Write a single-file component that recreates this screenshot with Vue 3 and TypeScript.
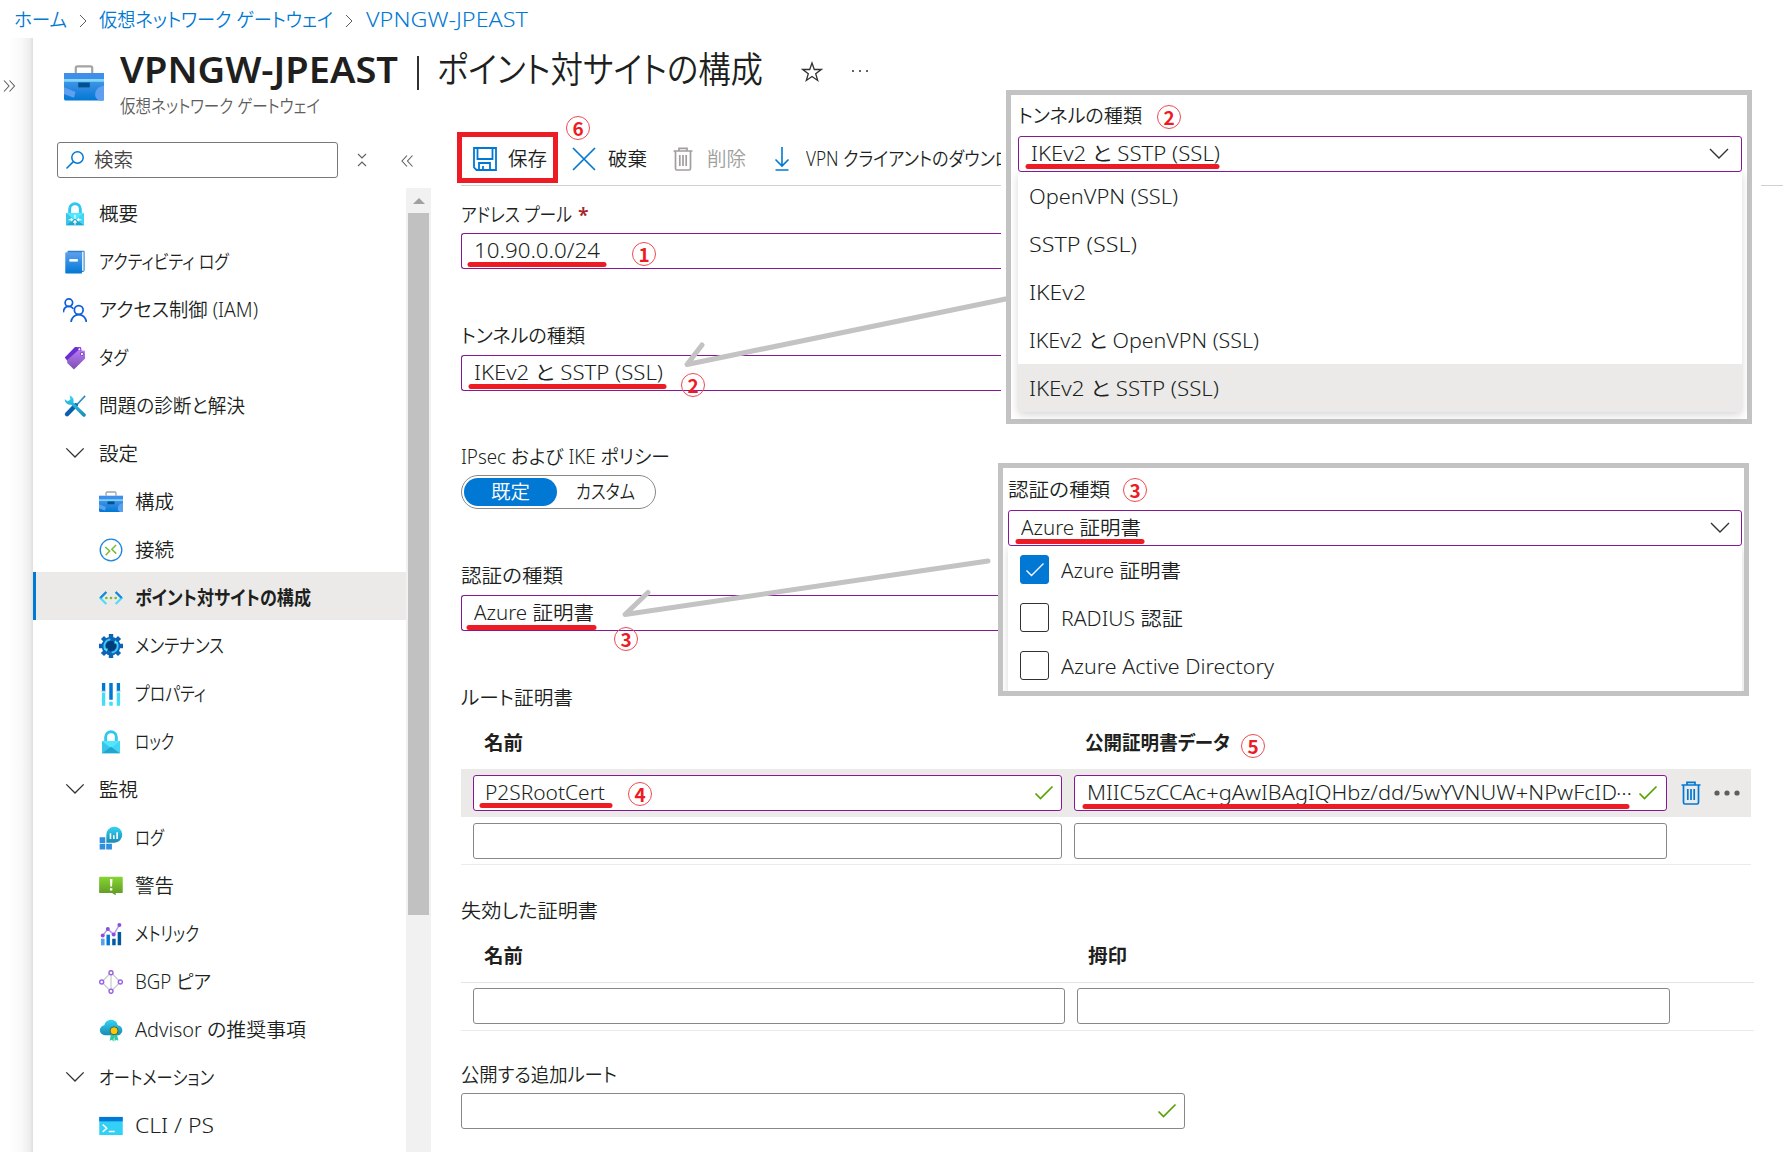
<script setup lang="ts">
import type { Directive } from 'vue'

/* Condenses or widens a label so that it takes exactly the given width. */
const vFit: Directive<HTMLElement, number> = {
  mounted(el, { value }) {
    el.style.display = 'inline-block'
    el.style.whiteSpace = 'pre'
    el.style.flex = 'none'
    const natural = el.getBoundingClientRect().width
    el.style.width = `${value}px`
    el.style.transformOrigin = '0 50%'
    el.style.transform = `scaleX(${value / natural})`
  },
}

interface NavItem {
  label: string
  w: number
  icon: string
  level: 0 | 1
  active?: boolean
}

const nav: NavItem[] = [
  { label: '概要', w: 39, icon: 'vpnlock', level: 0 },
  { label: 'アクティビティ ログ', w: 130, icon: 'book', level: 0 },
  { label: 'アクセス制御 (IAM)', w: 159, icon: 'people', level: 0 },
  { label: 'タグ', w: 29, icon: 'tag', level: 0 },
  { label: '問題の診断と解決', w: 146, icon: 'tools', level: 0 },
  { label: '設定', w: 39, icon: 'chevron', level: 0 },
  { label: '構成', w: 39, icon: 'case', level: 1 },
  { label: '接続', w: 39, icon: 'link', level: 1 },
  { label: 'ポイント対サイトの構成', w: 176, icon: 'p2s', level: 1, active: true },
  { label: 'メンテナンス', w: 89, icon: 'gear', level: 1 },
  { label: 'プロパティ', w: 71, icon: 'props', level: 1 },
  { label: 'ロック', w: 39, icon: 'lock', level: 1 },
  { label: '監視', w: 39, icon: 'chevron', level: 0 },
  { label: 'ログ', w: 29, icon: 'logs', level: 1 },
  { label: '警告', w: 39, icon: 'alert', level: 1 },
  { label: 'メトリック', w: 64, icon: 'metric', level: 1 },
  { label: 'BGP ピア', w: 76, icon: 'bgp', level: 1 },
  { label: 'Advisor の推奨事項', w: 171, icon: 'advisor', level: 1 },
  { label: 'オートメーション', w: 115, icon: 'chevron', level: 0 },
  { label: 'CLI / PS', w: 79, icon: 'cli', level: 1 },
]

const tunnelOptions = [
  { label: 'OpenVPN (SSL)', w: 149 },
  { label: 'SSTP (SSL)', w: 108 },
  { label: 'IKEv2', w: 57 },
  { label: 'IKEv2 と OpenVPN (SSL)', w: 230 },
  { label: 'IKEv2 と SSTP (SSL)', w: 190, selected: true },
]

const authOptions = [
  { label: 'Azure 証明書', w: 120, checked: true },
  { label: 'RADIUS 認証', w: 122 },
  { label: 'Azure Active Directory', w: 213 },
]

const badges = [
  { n: 1, x: 644, y: 254 },
  { n: 2, x: 693, y: 385 },
  { n: 3, x: 626, y: 639 },
  { n: 4, x: 640, y: 794 },
  { n: 5, x: 1253, y: 746 },
  { n: 6, x: 578, y: 128 },
  { n: 2, x: 1169, y: 117 },
  { n: 3, x: 1135, y: 490 },
]

const underlines = [
  [470, 604, 264.5],
  [471, 664, 386.5],
  [469, 594, 627.5],
  [482, 610, 805.5],
  [1085, 1627, 806.5],
  [1028, 1217, 166.5],
  [1018, 1142, 541.5],
]
</script>

<template>
  <div class="portal">
    <svg class="defs" width="0" height="0">
      <defs>
        <linearGradient id="gCyan" x1="0" y1="0" x2="0" y2="1"><stop offset="0" stop-color="#32d4f5" /><stop offset="1" stop-color="#198ab3" /></linearGradient>
        <linearGradient id="gBlue" x1="0" y1="0" x2="0" y2="1"><stop offset="0" stop-color="#5ea0ef" /><stop offset="1" stop-color="#0078d4" /></linearGradient>
        <linearGradient id="gPurple" x1="0" y1="0" x2="0" y2="1"><stop offset="0" stop-color="#b77af4" /><stop offset="1" stop-color="#7a4fb0" /></linearGradient>
        <linearGradient id="gGreen" x1="0" y1="0" x2="0" y2="1"><stop offset="0" stop-color="#86d633" /><stop offset="1" stop-color="#5e9624" /></linearGradient>
        <symbol id="case" viewBox="0 0 18 18">
          <path d="M5.3 4.400V2.300c0-.5.3-.8.8-.8h5.800c.5 0 .8.3.8.8v2.100" fill="none" stroke="#a3a3a3" stroke-width="1" />
          <path d="M0 4.400h18v11.200c0 .5-.3.900-.8.900H.8c-.5 0-.8-.4-.8-.9z" fill="url(#gBlue)" />
          <path d="M0 4.400h18V7H0z" fill="#3f8fe8" />
          <path d="M0 7h18v1.200H0z" fill="#7fd8f8" />
          <path d="M6.400 8.600h5.200v2.100H6.400z" fill="#00508f" />
          <path d="M0 10.600l5.200 2.100-.7 2.600L0 13.600zM18 10c-2.400.2-3.900 1.700-4 4 .1 1.200.9 2 2 2.500H18z" fill="#5ea0ef" />
        </symbol>
        <symbol id="trash" viewBox="0 0 24 24">
          <path d="M2.500 4h19M8 4V1.300h8V4M4.500 4v17.500c0 1 .6 1.500 1.500 1.500h12c.9 0 1.500-.5 1.500-1.500V4M8.800 8v11M12 8v11M15.200 8v11" fill="none" stroke="currentColor" stroke-width="1.700" />
        </symbol>
        <symbol id="check" viewBox="0 0 20 16"><path d="M1.500 8.500l5 5L18.500 1.500" fill="none" stroke="#57a300" stroke-width="1.700" /></symbol>
        <symbol id="down" viewBox="0 0 20 12"><path d="M1 1l9 9 9-9" fill="none" stroke="#323130" stroke-width="1.400" /></symbol>
      </defs>
    </svg>

    <nav class="crumbs">
      <a v-fit="53">ホーム</a>
      <svg width="8" height="14" viewBox="0 0 8 14"><path d="M1 1l6 6-6 6" fill="none" stroke="#605e5c" /></svg>
      <a v-fit="234">仮想ネットワーク ゲートウェイ</a>
      <svg width="8" height="14" viewBox="0 0 8 14"><path d="M1 1l6 6-6 6" fill="none" stroke="#605e5c" /></svg>
      <a class="here" v-fit="162">VPNGW-JPEAST</a>
    </nav>

    <div class="stage">
      <aside class="rail">
        <svg width="13" height="12" viewBox="0 0 13 12"><path d="M1 .5L6 6 1 11.500M6.500.5l5 5.500-5 5.500" fill="none" stroke="#605e5c" stroke-width="1.100" /></svg>
      </aside>

      <section class="blade">
        <header class="head">
          <svg class="logo" width="40" height="41" viewBox="0 0 18 18" preserveAspectRatio="none"><use href="#case" width="18" height="18" /></svg>
          <div class="titles">
            <h1>
              <b v-fit="278">VPNGW-JPEAST</b><i class="bar"></i><span v-fit="326">ポイント対サイトの構成</span>
            </h1>
            <p><span v-fit="200">仮想ネットワーク ゲートウェイ</span></p>
          </div>
          <svg class="star" width="22" height="22" viewBox="0 0 22 22"><path d="M11 2l2.300 6.500h6.900l-5.500 4.200 2 6.800-5.700-4-5.700 4 2-6.800L1.800 8.500h6.900z" fill="none" stroke="#323130" stroke-width="1.300" /></svg>
          <svg class="more" width="18" height="4"><g fill="#323130"><circle cx="2" cy="2" r="1" /><circle cx="9" cy="2" r="1" /><circle cx="16" cy="2" r="1" /></g></svg>
        </header>

        <div class="lower">
          <div class="side">
            <div class="searchrow">
              <div class="search">
                <svg width="20" height="20" viewBox="0 0 20 20"><circle cx="12.500" cy="7.500" r="5.700" fill="none" stroke="#0078d4" stroke-width="1.500" /><path d="M8.400 11.600L1.500 18.500" stroke="#0078d4" stroke-width="1.500" /></svg>
                <span v-fit="39">検索</span>
              </div>
              <svg class="collapse" width="10" height="14" viewBox="0 0 10 14"><path d="M1 1l4 4 4-4M1 13l4-4 4 4" fill="none" stroke="#605e5c" stroke-width="1.100" /></svg>
              <svg class="hide" width="13" height="12" viewBox="0 0 13 12"><path d="M6 .5L1 6l5 5.500M11.500.5l-5 5.500 5 5.500" fill="none" stroke="#605e5c" stroke-width="1.100" /></svg>
            </div>
            <div class="navwrap">
              <ul class="nav">
                <li v-for="it in nav" :key="it.label" :class="{ sub: it.level === 1, active: it.active }">
                  <svg width="24" height="24" viewBox="0 0 18 18">
                    <path v-if="it.icon === 'chevron'" d="M2.500 4.800L9 11.300l6.500-6.500" fill="none" stroke="#323130" stroke-width="1" />
                    <use v-else-if="it.icon === 'case'" href="#case" />
                    <g v-else-if="it.icon === 'vpnlock' || it.icon === 'lock'">
                      <path d="M5 9V5.300a4 4 0 018 0V9" fill="none" stroke="#32c8ee" stroke-width="2.200" />
                      <path d="M2.300 8.200h13.400v9.300H2.300z" fill="#50e6ff" />
                      <path d="M2.300 8.200L9 13.600l-6.700 3.900z" fill="#37c6ea" />
                      <path d="M15.700 8.200L9 13.600l6.700 3.900z" fill="#42d5f4" />
                      <path d="M2.300 17.500L9 12.600l6.700 4.900z" fill="#22a4cc" />
                      <path v-if="it.icon === 'vpnlock'" d="M9 9.600v2.700M9 14v3M4.200 13.300h2.500M13.800 13.300h-2.500M7.800 15.400L9 14l1.200 1.400M6 12.300l1.200 1L6 14.300M12 12.300l-1.200 1 1.200 1" stroke="#fff" stroke-width=".9" fill="none" />
                    </g>
                    <g v-else-if="it.icon === 'book'">
                      <path d="M3.500.6h12c.4 0 .7.300.7.700v13.500c0 1-.6 1.700-1.500 1.700H3z" fill="#2f7fc4" />
                      <path d="M14.200 1.300h1.300v14.300h-1.300z" fill="#d8ecfa" />
                      <path d="M2.600 1.700h11.600v16H2.600c-.5 0-.9-.4-.9-.9V2.600c0-.5.4-.9.900-.9z" fill="url(#gBlue)" />
                      <path d="M4.800 6.800h6.300v1.900H4.800z" fill="#fff" />
                    </g>
                    <g v-else-if="it.icon === 'people'" fill="none" stroke="#0f5fdb" stroke-width="1.300">
                      <circle cx="4.400" cy="3.500" r="2.800" /><path d="M.2 10.800c.3-2.800 2-4.500 4.200-4.500 1.400 0 2.600.6 3.400 1.700" />
                      <circle cx="11.800" cy="9" r="3.300" /><path d="M6 18c.4-3.300 2.900-5.600 5.800-5.600s5.400 2.300 5.800 5.600" />
                    </g>
                    <g v-else-if="it.icon === 'tag'">
                      <path d="M1.300 8.700L9 .8l4.500.1.500 3.400-9.800 8z" fill="#6b2fd0" />
                      <path d="M3.200 10.500l8.200-7.300 5 .3.200 5.800-8.400 8.400-5-5z" fill="url(#gPurple)" />
                      <circle cx="14.200" cy="6" r="1.200" fill="#fff" stroke="#6a35b5" stroke-width=".6" /><circle cx="12.300" cy="2.400" r=".8" fill="#fff" />
                    </g>
                    <g v-else-if="it.icon === 'tools'">
                      <path d="M16.600 1.400L9.500 9" stroke="#2b8cc4" stroke-width="1.200" />
                      <path d="M9.500 8.500l-6.500 6.700" stroke="#0b5fb0" stroke-width="3.300" stroke-linecap="round" />
                      <path d="M5 1.200a4 4 0 012.800 5.200l8.900 8.500c.6.600.6 1.200 0 1.800s-1.300.6-1.900 0L6.200 8A4.200 4.200 0 011.200 4l2.500 1.500L5.600 4z" fill="url(#gCyan)" />
                    </g>
                    <g v-else-if="it.icon === 'link'">
                      <circle cx="9" cy="9" r="8.100" fill="#fff" stroke="#1e85dd" stroke-width="1" />
                      <path d="M4.700 6.800l3.300 3-3 3.100M12.800 5.200L9.600 8.500l3.300 3.200" fill="none" stroke="#76bc2d" stroke-width="1.100" />
                    </g>
                    <g v-else-if="it.icon === 'p2s'">
                      <path d="M5.500 4.500L1 9l4.500 4.500M12.500 4.500L17 9l-4.500 4.500" fill="none" stroke="#50dcf8" stroke-width="1.700" />
                      <path d="M5.500 4.500L1 9M12.500 4.500L17 9" fill="none" stroke="#1a86dc" stroke-width="1.700" />
                      <circle cx="5.500" cy="9" r="1" fill="#76bc2d" /><circle cx="9" cy="9" r="1" fill="#76bc2d" /><circle cx="12.500" cy="9" r="1" fill="#76bc2d" />
                    </g>
                    <g v-else-if="it.icon === 'gear'">
                      <path d="M9 0v18M0 9h18M2.600 2.600l12.800 12.800M15.400 2.600L2.600 15.400" stroke="#0a64b8" stroke-width="3.300" />
                      <circle cx="9" cy="9" r="7" fill="#0a64b8" />
                      <circle cx="9" cy="9" r="3.800" fill="#003c78" />
                      <path d="M4.800 11.800A5 5 0 018.500 4.100M13.200 6.200a5 5 0 01-3.700 7.700" fill="none" stroke="#40c8f0" stroke-width="1.300" />
                      <path d="M3.500 11l3.200-.2-.8 2.500zM14.500 7l-3.200.2.800-2.500z" fill="#50e6ff" />
                    </g>
                    <g v-else-if="it.icon === 'props'">
                      <path d="M2.200.8h2.500v6H2.200zM13.300.8h2.500v6h-2.500zM7.700.8h2.600v12.500H7.700z" fill="#0078d4" />
                      <path d="M2.200 7.900h2.500v10H2.200zM13.300 7.900h2.500v10h-2.500zM7.700 14.800h2.600v3.100H7.700z" fill="#45dcf8" />
                      <path d="M1.700 6.600h3.500v.9H1.700zM12.800 6.600h3.500v.9h-3.500z" fill="#b8d4e8" />
                    </g>
                    <g v-else-if="it.icon === 'logs'">
                      <path d="M.5 8.500h4.200v4.300H.5zM.5 13.400h4.200v4.200H.5zM5.400 13.400h4.300v4.200H5.400z" fill="#2f8fe0" />
                      <path d="M5.500 12.500V7A6 6 0 1111.600 12.500z" fill="url(#gCyan)" />
                      <path d="M8 5.500h1.200v4.200H8zM10.500 7h1.200v2.700h-1.200zM13 4.600h1.200v5.100H13z" fill="#fff" />
                    </g>
                    <g v-else-if="it.icon === 'alert'">
                      <path d="M.8 2h16.400c.3 0 .6.300.6.600v11c0 .4-.3.700-.6.700h-4.700V16l-2.700-1.700H.8c-.4 0-.7-.3-.7-.7v-11c0-.3.300-.6.700-.6z" fill="url(#gGreen)" />
                      <path d="M8.200 3.800h1.900l-.3 5.500H8.500zM8.200 10.700h1.800v1.700H8.200z" fill="#fff" />
                    </g>
                    <g v-else-if="it.icon === 'metric'">
                      <path d="M1.500 12.500h2.700v5H1.500z" fill="#5ea0ef" /><path d="M5.600 9.500h2.600v8H5.600z" fill="#0078d4" /><path d="M9.900 12.500h2.600v5H9.900zM14 7.500h2.600v10H14z" fill="#005ba1" />
                      <path d="M2.800 10.200l3.800-5 4.400 4.200 4.300-7.200" fill="none" stroke="#b79be8" stroke-width="1.100" />
                      <g fill="#8a4fe0"><circle cx="2.800" cy="10.200" r="1.500" /><circle cx="6.600" cy="5.200" r="1.500" /><circle cx="11" cy="9.400" r="1.500" /><circle cx="15.300" cy="2.200" r="1.500" /></g>
                    </g>
                    <g v-else-if="it.icon === 'bgp'">
                      <path d="M9 2L2 9l7 7 7-7zM9 2v14" fill="none" stroke="#c8c8c8" stroke-width=".9" />
                      <g fill="#fff" stroke="#9a63e6" stroke-width="1.100"><circle cx="9" cy="2" r="1.500" /><circle cx="2" cy="9" r="1.500" /><circle cx="16" cy="9" r="1.500" /><circle cx="9" cy="16" r="1.500" /></g>
                    </g>
                    <g v-else-if="it.icon === 'advisor'">
                      <path d="M4.500 13A4 4 0 01.6 9.200c0-2 1.500-3.600 3.400-3.800C4.600 3 6.500 1.300 9 1.300c2.600 0 4.600 1.700 5 4.200 2 .2 3.500 1.700 3.500 3.700S15.800 13 13.700 13z" fill="url(#gCyan)" />
                      <path d="M9 12l-1 5 1.800-.6.900 1.500.9-5zM13.500 12l1 5-1.800-.6-.9 1.500-.5-5z" fill="#2cc8a8" />
                      <circle cx="11.300" cy="9.600" r="3" fill="#ffca00" stroke="#3a5a60" stroke-width=".7" />
                    </g>
                    <g v-else-if="it.icon === 'cli'">
                      <path d="M.2 2.200h17.600v13.600H.2z" fill="#32d0f5" /><path d="M.2 2.200h17.600v3.300H.2z" fill="#0078d4" />
                      <path d="M2.800 8l3 2.700-3 2.700M7.300 13.200h4.500" fill="none" stroke="#fff" stroke-width="1.100" />
                    </g>
                  </svg>
                  <span v-fit="it.w">{{ it.label }}</span>
                </li>
              </ul>
              <div class="scroll">
                <i class="arrow"></i>
                <i class="thumb"></i>
              </div>
            </div>
          </div>

          <main class="content">
            <div class="toolbar">
              <span class="cmd save">
                <svg width="24" height="24" viewBox="0 0 24 24"><path d="M1 1h22v22H3.500L1 20.500zM4.500 1v11h15V1M6 23v-7h11v7M10 23v-4" fill="none" stroke="#0078d4" stroke-width="1.800" /></svg>
                <span v-fit="39">保存</span>
              </span>
              <span class="cmd discard">
                <svg width="24" height="24" viewBox="0 0 24 24"><path d="M1 1l22 22M23 1L1 23" stroke="#0078d4" stroke-width="1.700" /></svg>
                <span v-fit="39">破棄</span>
              </span>
              <span class="cmd disabled">
                <svg width="24" height="24"><use href="#trash" /></svg>
                <span v-fit="39">削除</span>
              </span>
              <span class="cmd">
                <svg width="24" height="24" viewBox="0 0 24 24"><path d="M12 0v19M5.500 12.500L12 19l6.500-6.500M5.500 23h13" fill="none" stroke="#0078d4" stroke-width="1.600" /></svg>
                <span v-fit="236">VPN クライアントのダウンロード</span>
              </span>
            </div>
            <i class="rightline"></i>

            <div class="form">
              <label class="lbl first"><span v-fit="111">アドレス プール</span><em>*</em></label>
              <div class="field cut"><span v-fit="126">10.90.0.0/24</span></div>
              <label class="lbl second"><span v-fit="124">トンネルの種類</span></label>
              <div class="field cut second"><span v-fit="189">IKEv2 と SSTP (SSL)</span></div>
              <label class="lbl third"><span v-fit="209">IPsec および IKE ポリシー</span></label>
              <div class="toggle">
                <span class="on"><span v-fit="39">既定</span></span>
                <span class="off"><span v-fit="59">カスタム</span></span>
              </div>
              <label class="lbl fourth"><span v-fit="102">認証の種類</span></label>
              <div class="field cut second"><span v-fit="120">Azure 証明書</span></div>
            </div>

            <h2 class="lbl root"><span v-fit="112">ルート証明書</span></h2>
            <div class="thead">
              <span class="c1"><b v-fit="39">名前</b></span><span><b v-fit="145">公開証明書データ</b></span>
            </div>
            <div class="trow hot">
              <div class="field a"><span v-fit="120">P2SRootCert</span><svg width="20" height="16"><use href="#check" /></svg></div>
              <div class="field b"><span v-fit="545">MIIC5zCCAc+gAwIBAgIQHbz/dd/5wYVNUW+NPwFcID<span class="dotsup">…</span></span><svg width="20" height="16"><use href="#check" /></svg></div>
              <svg class="bin" width="24" height="24"><use href="#trash" /></svg>
              <svg class="dots" width="26" height="6"><g fill="#605e5c"><circle cx="3" cy="3" r="2.600" /><circle cx="13" cy="3" r="2.600" /><circle cx="23" cy="3" r="2.600" /></g></svg>
            </div>
            <div class="trow last">
              <div class="field plain a"></div>
              <div class="field plain b"></div>
            </div>

            <h2 class="lbl revoked"><span v-fit="137">失効した証明書</span></h2>
            <div class="thead wide">
              <span class="c1"><b v-fit="39">名前</b></span><span><b v-fit="39">拇印</b></span>
            </div>
            <div class="trow blank">
              <div class="field plain a"></div>
              <div class="field plain b"></div>
            </div>

            <label class="lbl routes"><span v-fit="156">公開する追加ルート</span></label>
            <div class="field plain route"><svg width="20" height="16"><use href="#check" /></svg></div>
          </main>
        </div>
      </section>
    </div>

    <section class="callout tunnel">
      <label><span v-fit="124">トンネルの種類</span></label>
      <div class="field"><span v-fit="189">IKEv2 と SSTP (SSL)</span><svg width="20" height="12"><use href="#down" /></svg></div>
      <ul>
        <li v-for="o in tunnelOptions" :key="o.label" :class="{ sel: o.selected }"><span v-fit="o.w">{{ o.label }}</span></li>
      </ul>
    </section>

    <section class="callout auth">
      <label><span v-fit="102">認証の種類</span></label>
      <div class="field"><span v-fit="120">Azure 証明書</span><svg width="20" height="12"><use href="#down" /></svg></div>
      <ul>
        <li v-for="o in authOptions" :key="o.label">
          <i :class="{ on: o.checked }"><svg v-if="o.checked" width="20" height="16" viewBox="0 0 20 16"><path d="M1.500 8.500l5 5L18.500 1.500" fill="none" stroke="#fff" stroke-width="1.400" /></svg></i>
          <span v-fit="o.w">{{ o.label }}</span>
        </li>
      </ul>
    </section>

    <svg class="ink" width="1783" height="1152">
      <g fill="none" stroke="#c3c3c3" stroke-width="5" stroke-linecap="round" stroke-linejoin="round">
        <path d="M1008 298.500L687 364.500 702 345" />
        <path d="M988 561L625 614.500 648 592.500" />
      </g>
      <g stroke="#ed1c24" stroke-width="5" stroke-linecap="round">
        <path v-for="u in underlines" :key="u.join()" :d="`M${u[0]} ${u[2]}H${u[1]}`" />
      </g>
      <rect x="459.500" y="134.500" width="96" height="46" fill="none" stroke="#ed1c24" stroke-width="5" />
    </svg>
    <span v-for="(b, i) in badges" :key="i" class="badge" :style="{ left: b.x - 12 + 'px', top: b.y - 12 + 'px' }">{{ b.n }}</span>
  </div>
</template>

<style>
body {
  margin: 0;
  background: #fff;
}
</style>

<style scoped>
.portal {
  position: relative;
  width: 1783px;
  height: 1152px;
  overflow: hidden;
  background: #fff;
  color: #201f1e;
  font: 350 19.5px/28px "Noto Sans", "Noto Sans CJK JP", sans-serif;
  font-feature-settings: "palt";
}
.portal * {
  box-sizing: border-box;
}
svg {
  display: block;
  flex: none;
}
ul,
h1,
h2,
p {
  margin: 0;
  padding: 0;
  list-style: none;
  font-weight: inherit;
  font-size: inherit;
}
b {
  font-weight: 700;
}
.defs {
  position: absolute;
}
.crumbs {
  display: flex;
  align-items: center;
  height: 39px;
  margin-bottom: -1px;
  padding-left: 14px;
  color: #0078d4;
}
.crumbs svg {
  margin: 2px 12px 0;
}
.here {
  margin-left: 1px;
}
.stage {
  display: flex;
  height: 1114px;
}
.rail {
  width: 33px;
  padding: 42px 0 0 3px;
  background: linear-gradient(90deg, #fff 25%, #f9f9f9 65%, #eee 90%, #dedede 100%);
}
.blade {
  flex: 1;
  min-width: 0;
  background: #fff;
}
.head {
  display: flex;
  height: 94px;
  padding-left: 31px;
}
.logo {
  margin-top: 25px;
}
.titles {
  margin-left: 16px;
}
h1 {
  display: flex;
  align-items: center;
  height: 48px;
  margin-top: 8px;
  font-size: 36px;
  line-height: 48px;
}
h1 b {
  font-weight: 600;
}
.bar {
  width: 2px;
  height: 34px;
  margin: 6px 18px 0 19px;
  background: #323130;
}
.titles p {
  font-size: 18px;
  line-height: 26px;
  margin-top: -1px;
  color: #605e5c;
}
.star {
  margin: 23px 0 0 38px;
}
.more {
  margin: 31px 0 0 28px;
}
.lower {
  display: flex;
}
.side {
  width: 398px;
}
.searchrow {
  display: flex;
  align-items: center;
  height: 56px;
  padding-left: 24px;
}
.search {
  display: flex;
  align-items: center;
  width: 281px;
  height: 36px;
  padding-left: 7px;
  gap: 9px;
  border: 1px solid #7a7876;
  border-radius: 3px;
  color: #484644;
}
.collapse {
  margin-left: 19px;
}
.hide {
  margin: 1px 0 0 34px;
}
.navwrap {
  display: flex;
}
.nav {
  width: 373px;
}
.nav li {
  display: flex;
  align-items: center;
  height: 48px;
  padding: 4px 0 0 30px;
  gap: 12px;
}
.nav li span {
  position: relative;
  top: -0.5px;
}
.nav li.sub {
  padding-left: 66px;
}
.nav li.active {
  padding-left: 63px;
  border-left: 3px solid #0078d4;
  background: #ebeae9;
  font-weight: 700;
}
.scroll {
  width: 25px;
  height: 964px;
  background: #f1f1f1;
}
.arrow {
  display: block;
  width: 0;
  margin: 10px auto 9px;
  border: 6px solid transparent;
  border-top: 0;
  border-bottom-color: #a0a0a0;
}
.thumb {
  display: block;
  width: 21px;
  height: 702px;
  margin: 0 auto;
  background: #c1c1c1;
}
.content {
  position: relative;
  flex: 1;
  padding-left: 30px;
}
.toolbar {
  display: flex;
  align-items: center;
  width: 540px;
  height: 54px;
  overflow: hidden;
  border-bottom: 1px solid #d2d0ce;
}
.rightline {
  position: absolute;
  left: 1330px;
  top: 53px;
  width: 22px;
  height: 1px;
  background: #d2d0ce;
}
.cmd {
  display: flex;
  flex: none;
  align-items: center;
  gap: 12px;
  margin-right: 24px;
}
.cmd.save {
  gap: 11px;
  margin-left: 12px;
  margin-right: 25px;
}
.disabled {
  color: #a19f9d;
}
.lbl {
  display: flex;
  height: 28px;
  line-height: 29px;
}
.lbl em {
  margin-left: 6px;
  color: #a4262c;
  font-style: normal;
  font-weight: 600;
}
.first {
  margin: 14px 0 5px;
}
.second.lbl {
  margin: 52px 0 6px;
}
.third {
  margin: 51px 0 5px;
}
.fourth {
  margin: 52px 0 6px;
}
.field {
  display: flex;
  align-items: center;
  justify-content: space-between;
  height: 36px;
  padding: 0 12px;
  border: 1px solid #881798;
  border-radius: 3px;
  background: #fff;
}
.field.cut {
  width: 540px;
  border-right: 0;
  border-radius: 3px 0 0 3px;
}
.field.plain {
  border-color: #8a8886;
}
.dotsup {
  position: relative;
  top: -5px;
}
.toggle {
  display: flex;
  width: 195px;
  height: 34px;
  padding: 2px;
  border: 1px solid #8a8886;
  border-radius: 17px;
  line-height: 28px;
}
.on,
.off {
  display: flex;
  justify-content: center;
}
.toggle .on {
  width: 93px;
  height: 28px;
  border-radius: 14px;
  background: #0078d4;
  color: #fff;
}
.off {
  width: 96px;
}
.root {
  margin-top: 52px;
}
.thead {
  display: flex;
  width: 1290px;
  margin-top: 18px;
  padding: 0 0 12px 23px;
}
.thead .c1 {
  width: 601px;
}
.trow {
  display: flex;
  align-items: center;
  width: 1290px;
  height: 48px;
  padding-left: 12px;
}
.hot {
  background: #ebeae8;
}
.field.a {
  width: 589px;
  margin-right: 12px;
  padding-left: 11px;
  padding-right: 7px;
}
.field.b {
  width: 593px;
  padding-right: 8px;
}
.bin {
  margin-left: 12px;
  color: #0078d4;
}
.dots {
  margin-left: 11px;
}
.last {
  border-bottom: 1px solid #edebe9;
}
.revoked {
  margin-top: 31px;
}
.thead.wide {
  width: 1293px;
  border-bottom: 1px solid #e6e4e2;
}
.thead.wide .c1 {
  width: 604px;
}
.blank {
  align-items: flex-start;
  width: 1293px;
  padding-top: 5px;
  border-bottom: 1px solid #edebe9;
}
.blank .field.a {
  width: 592px;
}
.routes {
  margin: 29px 0 5px;
}
.route {
  width: 724px;
  justify-content: flex-end;
  padding-right: 7px;
}
.callout {
  position: absolute;
  border: 5px solid #c3c3c3;
  background: #fff;
}
.callout label {
  display: block;
  height: 28px;
}
.tunnel {
  left: 1006px;
  top: 90px;
  width: 746px;
  height: 334px;
  padding: 7px 5px 0 7px;
}
.tunnel .field {
  margin-top: 6px;
}
.callout ul {
  border-radius: 0 0 3px 3px;
  box-shadow: 0 3px 8px rgba(0, 0, 0, 0.16);
}
.callout .field {
  position: relative;
}
.tunnel li {
  height: 48px;
  padding: 11px 0 0 11px;
}
.tunnel .sel {
  background: #ebeae8;
}
.auth {
  left: 998px;
  top: 463px;
  width: 751px;
  height: 233px;
  padding: 8px 2px 0 5px;
  overflow: hidden;
}
.auth .field {
  margin-top: 6px;
}
.auth .field svg {
  position: relative;
  left: 1px;
}
.auth ul {
  height: 150px;
}
.auth li {
  display: flex;
  align-items: center;
  height: 48px;
  padding-left: 12px;
  gap: 12px;
}
.auth li span {
  margin-top: 1px;
}
.auth li i {
  display: flex;
  align-items: center;
  justify-content: center;
  width: 29px;
  height: 29px;
  margin-top: -1px;
  border: 1px solid #323130;
  border-radius: 3px;
}
.auth li i.on {
  border-color: #0078d4;
  background: #0078d4;
}
.ink {
  position: absolute;
  left: 0;
  top: 0;
}
.badge {
  position: absolute;
  width: 24px;
  height: 24px;
  border: 1px solid #ee4a50;
  border-radius: 50%;
  color: #ed1c24;
  font-family: "Noto Sans CJK JP", "Noto Sans", sans-serif;
  font-size: 19px;
  font-weight: 700;
  line-height: 21px;
  text-align: center;
}
</style>
